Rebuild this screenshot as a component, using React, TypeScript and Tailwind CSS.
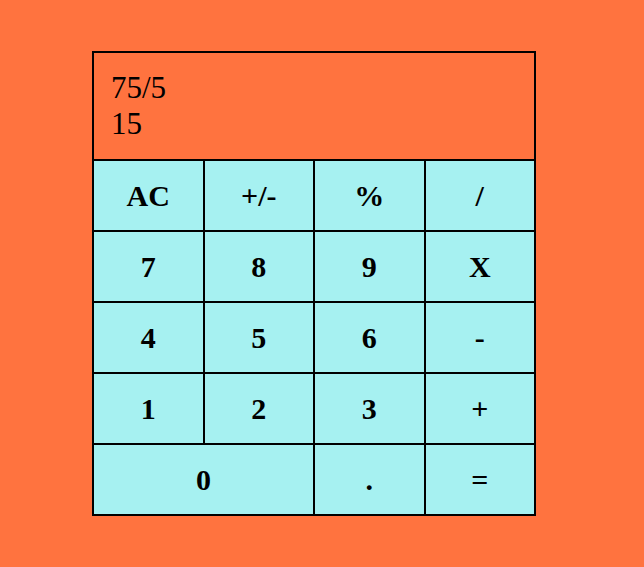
const keys: { label: string; wide?: boolean }[] = [
  { label: 'AC' }, { label: '+/-' }, { label: '%' }, { label: '/' },
  { label: '7' }, { label: '8' }, { label: '9' }, { label: 'X' },
  { label: '4' }, { label: '5' }, { label: '6' }, { label: '-' },
  { label: '1' }, { label: '2' }, { label: '3' }, { label: '+' },
  { label: '0', wide: true }, { label: '.' }, { label: '=' },
]

export default function App() {
  return (
    <div className="min-h-screen bg-[#ff733f] flex items-center pl-[92px] font-['Liberation_Serif',serif]">
      <div className="w-[444px] border-2 border-black bg-black">
        <div className="h-[108px] px-[17px] pt-[17px] text-[31px] leading-[36px] text-black bg-[#ff733f] border-b-2 border-black">
          <div>75/5</div>
          <div>15</div>
        </div>
        <div className="grid grid-cols-4 gap-[2px]">
          {keys.map(k => (
            <button
              key={k.label}
              className={`h-[69px] bg-[#a6f1f1] text-[30px] font-bold text-black flex items-center justify-center ${k.wide ? 'col-span-2' : ''}`}
            >
              {k.label}
            </button>
          ))}
        </div>
      </div>
    </div>
  )
}
